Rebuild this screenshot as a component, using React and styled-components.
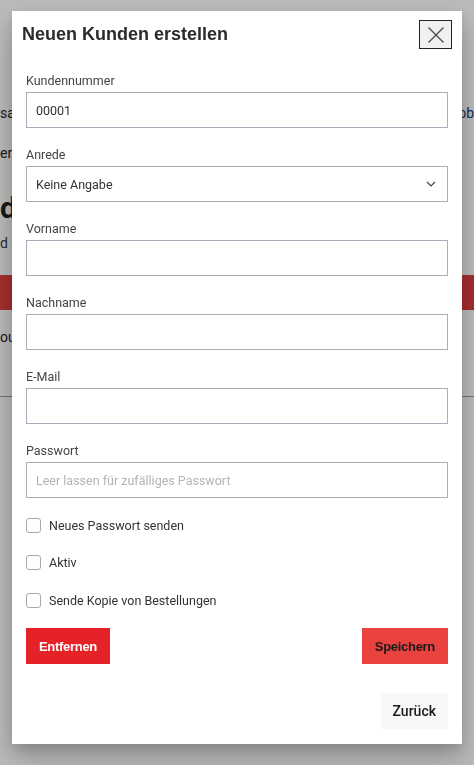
import React from "react";
import styled, { createGlobalStyle } from "styled-components";

const GlobalStyle = createGlobalStyle`
  html, body {
    margin: 0;
    padding: 0;
    height: 100%;
    overflow: hidden;
  }
  body {
    font-family: Roboto, "Liberation Sans", Arial, sans-serif;
    background: #fff;
  }
`;

const Page = styled.div`
  position: relative;
  width: 474px;
  height: 765px;
  overflow: hidden;
  background: #fff;
  color: #222;
  font-size: 14px;
`;

const PageLine = styled.div`
  display: flex;
  justify-content: space-between;
  height: ${p => p.h || 20}px;
  margin-top: ${p => p.mt || 0}px;
  align-items: center;
  white-space: nowrap;
  font-size: ${p => p.size || 14}px;
  font-weight: ${p => (p.bold ? 700 : 400)};
  color: ${p => p.color || "#222"};
`;

const Link = styled.span`
  color: #1d3a6b;
`;

const RedBand = styled.div`
  height: 35px;
  margin-top: ${p => p.mt}px;
  background: #e43f3f;
`;

const Rule = styled.div`
  height: 1px;
  margin-top: ${p => p.mt}px;
  background: #999;
`;

const Mask = styled.div`
  position: fixed;
  inset: 0;
  background-color: rgba(0, 0, 0, 0.27);
  z-index: 10;
`;

const ModalWrapper = styled.div`
  position: absolute;
  top: 11px;
  left: 12px;
  width: 450px;
  background: #fff;
  box-sizing: border-box;
  padding: 9px 14px 15px 14px;
  box-shadow: 0 14px 28px rgba(0, 0, 0, 0.22), 0 6px 12px rgba(0, 0, 0, 0.12);
`;

const Header = styled.header`
  display: flex;
  justify-content: space-between;
  align-items: center;
  margin: 0 -4px 24px -4px;
`;

const Title = styled.h1`
  margin: 0;
  font-family: "Liberation Sans", Arial, sans-serif;
  font-size: 18px;
  font-weight: 700;
  color: #2b2b2b;
`;

const Close = styled.button`
  width: 33px;
  height: 29px;
  padding: 0;
  border: 1px solid #222;
  background: #f0f0f0;
  display: flex;
  align-items: center;
  justify-content: center;
  cursor: pointer;
`;

const Field = styled.div`
  display: flex;
  flex-direction: column;
  margin-bottom: 19px;
`;

const Label = styled.label`
  font-size: 12.5px;
  line-height: 16px;
  color: #444;
  margin-bottom: 3px;
`;

const Input = styled.input`
  box-sizing: border-box;
  height: 36px;
  width: 100%;
  border: 1px solid #a7afbb;
  padding: 0 9px;
  font-family: Roboto, Arial, sans-serif;
  font-size: 12.5px;
  color: #333;
  background: #fff;
  outline: none;

  &::placeholder {
    color: #b4b4b4;
  }
`;

const SelectBox = styled.div`
  box-sizing: border-box;
  height: 36px;
  border: 1px solid #a7afbb;
  padding: 0 11px 0 9px;
  display: flex;
  align-items: center;
  justify-content: space-between;
  font-size: 12.5px;
  color: #333;
`;

const Check = styled.label`
  display: flex;
  align-items: center;
  gap: 8px;
  height: 18px;
  margin-top: ${p => p.mt}px;
  font-size: 12.5px;
  color: #333;
`;

const Box = styled.span`
  box-sizing: border-box;
  width: 15px;
  height: 15px;
  border: 1px solid #a4aab2;
  border-radius: 3px;
  background: #fff;
`;

const Actions = styled.div`
  display: flex;
  justify-content: space-between;
  margin-top: ${p => p.mt}px;
`;

const Footer = styled.div`
  display: flex;
  justify-content: flex-end;
  margin-top: 29px;
`;

const Button = styled.button`
  height: 36px;
  padding: 0 ${p => p.px || 13}px;
  border: none;
  font-family: ${p => (p.plain ? "Roboto, Arial, sans-serif" : "'Liberation Sans', Arial, sans-serif")};
  font-size: ${p => (p.plain ? 14 : 13)}px;
  font-weight: ${p => (p.plain ? 500 : 700)};
  letter-spacing: ${p => (p.plain ? 0 : -0.3)}px;
  color: ${p => p.fg};
  background: ${p => p.bg};
  cursor: pointer;
`;

const Chevron = () => (
  <svg width="10" height="6" viewBox="0 0 10 6" fill="none">
    <path d="M1 1l4 4 4-4" stroke="#444" strokeWidth="1.2" />
  </svg>
);

const CloseIcon = () => (
  <svg width="18" height="18" viewBox="0 0 18 18" fill="none">
    <path d="M1.5 1.5l15 15M16.5 1.5l-15 15" stroke="#4a4f55" strokeWidth="1.4" />
  </svg>
);

const fields = [
  { label: "Vorname" },
  { label: "Nachname" },
  { label: "E-Mail" },
  { label: "Passwort", placeholder: "Leer lassen für zufälliges Passwort" },
];

export default function App() {
  return (
    <>
      <GlobalStyle />
      <Page>
        <PageLine mt={103}>
          <span>sa</span>
          <Link>ob</Link>
        </PageLine>
        <PageLine mt={20}>
          <span>erk</span>
          <span />
        </PageLine>
        <PageLine mt={26} h={36} size={30} bold>
          <span>d</span>
          <span />
        </PageLine>
        <PageLine mt={7} h={22} color="#3a3a3a">
          <span>d ä</span>
          <span />
        </PageLine>
        <RedBand mt={21} />
        <PageLine mt={17} h={20}>
          <span>ou</span>
          <span />
        </PageLine>
        <Rule mt={49} />

        <Mask>
          <ModalWrapper role="dialog" aria-label="Neuen Kunden erstellen">
            <Header>
              <Title>Neuen Kunden erstellen</Title>
              <Close aria-label="close">
                <CloseIcon />
              </Close>
            </Header>

            <Field>
              <Label>Kundennummer</Label>
              <Input defaultValue="00001" />
            </Field>
            <Field>
              <Label>Anrede</Label>
              <SelectBox>
                <span>Keine Angabe</span>
                <Chevron />
              </SelectBox>
            </Field>
            {fields.map(f => (
              <Field key={f.label}>
                <Label>{f.label}</Label>
                <Input placeholder={f.placeholder} />
              </Field>
            ))}

            <Check mt={-1}>
              <Box />
              Neues Passwort senden
            </Check>
            <Check mt={19}>
              <Box />
              Aktiv
            </Check>
            <Check mt={20}>
              <Box />
              Sende Kopie von Bestellungen
            </Check>

            <Actions mt={19}>
              <Button bg="#e52228" fg="#fff">Entfernen</Button>
              <Button bg="#e9423f" fg="#1a1a1a">Speichern</Button>
            </Actions>
            <Footer>
              <Button plain bg="#f8f8f8" fg="#1a1a1a" px={12}>Zurück</Button>
            </Footer>
          </ModalWrapper>
        </Mask>
      </Page>
    </>
  );
}
